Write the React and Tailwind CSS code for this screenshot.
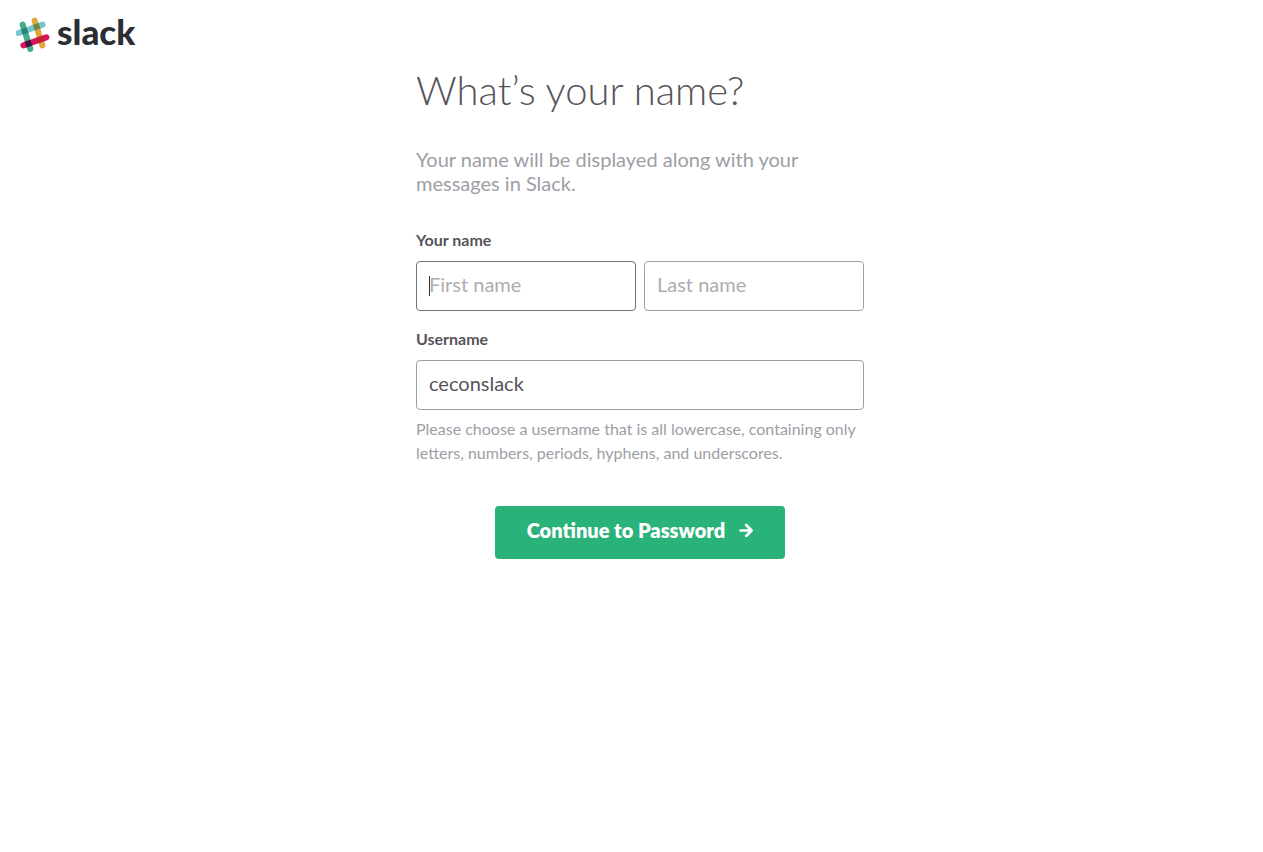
import { useState } from 'react';

const inputStyles =
  'block w-full h-[50px] rounded-[4px] border border-[#9e9ea6] bg-white px-3 pb-1 text-xl text-[#555459] placeholder:text-[#adadaf] outline-none focus:border-[#717274]';

const labelStyles = 'block mb-[9px] text-base leading-6 font-bold text-[#555459]';

const LogoMark = () => (
  <svg viewBox="24 24 102 114" className="w-[34px] h-[38px] shrink-0" aria-hidden="true">
    <g strokeWidth="18" strokeLinecap="round" fill="none">
      <path d="M80 38L103 112" stroke="#e3a63a" />
      <path d="M44 50L67 123" stroke="#40ae86" />
      <path d="M32 75L104 50" stroke="#76c7cf" />
      <path d="M46 112L115 88" stroke="#d6145f" />
    </g>
    {/* Where the bars cross */}
    <rect x="41" y="60" width="18" height="18" fill="#258573" transform="rotate(-18 50 69)" />
    <rect x="77" y="47" width="18" height="18" fill="#77893c" transform="rotate(-18 86 56)" />
    <rect x="52.5" y="98" width="18" height="18" fill="#3c1840" transform="rotate(-18 61.5 107)" />
    <rect x="88.5" y="85" width="18" height="18" fill="#c8202f" transform="rotate(-18 97.5 94)" />
  </svg>
);

const ArrowIcon = () => (
  <svg viewBox="0 0 14 14" className="w-3.5 h-3.5" fill="none" stroke="currentColor" strokeWidth="2.6" strokeLinecap="round" strokeLinejoin="round" aria-hidden="true">
    <path d="M1.6 7.5H11.8M7.2 2L12.6 7.5L7.2 13" />
  </svg>
);

export default function App() {
  const [firstName, setFirstName] = useState('');
  const [lastName, setLastName] = useState('');
  const [username, setUsername] = useState('ceconslack');

  return (
    <div className="min-h-screen bg-white font-['Lato',sans-serif] text-[#555459]">
      <header className="flex px-4 pt-4">
        <a href="#" className="flex items-center gap-[7px] h-[38px] text-[#2b2f33]">
          <LogoMark />
          <span className="pb-2 text-[35px] leading-none font-black">slack</span>
        </a>
      </header>

      <main className="pl-[17px] pt-3">
        <form className="mx-auto max-w-[448px]" onSubmit={(e) => e.preventDefault()}>
          <h1 className="text-[40px] leading-[49px] font-light">What’s your name?</h1>
          <p className="mt-8 text-xl leading-6 text-[#9e9ea6]">
            Your name will be displayed along with your messages in Slack.
          </p>

          <div className="mt-[33px]">
            <label htmlFor="first-name" className={labelStyles}>Your name</label>
            <div className="flex gap-2">
              <div className="relative flex-1">
                <input
                  id="first-name"
                  type="text"
                  autoFocus
                  placeholder="First name"
                  value={firstName}
                  onChange={(e) => setFirstName(e.target.value)}
                  className={`${inputStyles} peer`}
                />
                {/* Text cursor of the empty, focused field */}
                {firstName === '' && (
                  <span className="pointer-events-none absolute left-[13px] top-[15px] hidden h-5 w-px bg-[#333333] peer-focus:block" />
                )}
              </div>
              <div className="flex-1">
                <input
                  id="last-name"
                  type="text"
                  aria-label="Last name"
                  placeholder="Last name"
                  value={lastName}
                  onChange={(e) => setLastName(e.target.value)}
                  className={inputStyles}
                />
              </div>
            </div>
          </div>

          <div className="mt-4">
            <label htmlFor="username" className={labelStyles}>Username</label>
            <input
              id="username"
              type="text"
              value={username}
              onChange={(e) => setUsername(e.target.value)}
              className={inputStyles}
            />
            <p className="mt-[7px] text-base leading-6 text-[#9e9ea6]">
              Please choose a username that is all lowercase, containing only letters, numbers, periods, hyphens, and underscores.
            </p>
          </div>

          <button
            type="submit"
            className="mx-auto mt-[41px] flex h-[53px] items-center gap-3.5 rounded-[4px] bg-[#2ab27b] px-8 pb-1.5 text-xl font-extrabold text-white"
          >
            Continue to Password
            <ArrowIcon />
          </button>
        </form>
      </main>
    </div>
  );
}
